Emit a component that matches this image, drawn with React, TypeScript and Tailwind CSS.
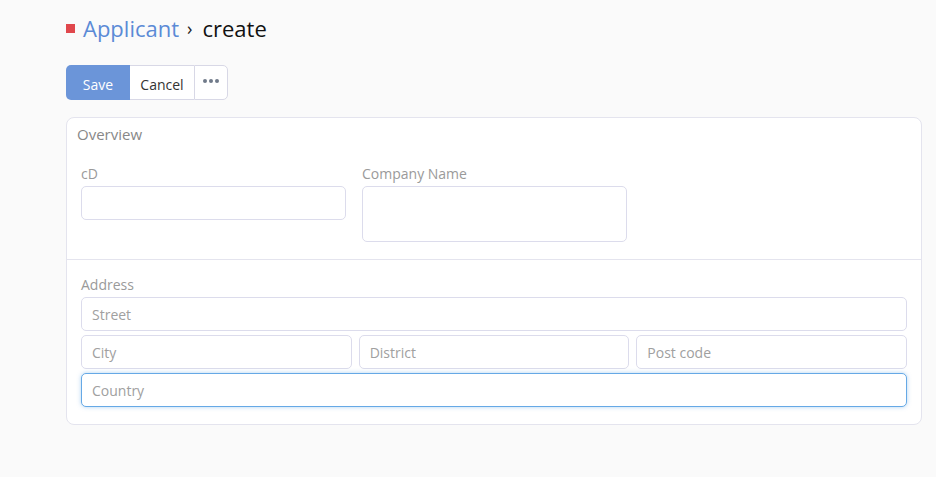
import type { ReactNode } from "react";

const inputBase =
  "h-[34px] w-full rounded-[5px] border border-[#dcdcec] bg-white px-[10px] text-[14px] text-[#333] placeholder:text-[#a0a0a0] outline-none";

const Field = ({ label, children }: { label: string; children: ReactNode }) => (
  <div className="flex w-[265px] flex-col">
    <label className="mb-[2px] text-[14px] leading-[20px] text-[#9a9a9a]">{label}</label>
    {children}
  </div>
);

export default function App() {
  return (
    <div
      className="min-h-[477px] bg-[#fafafa] pl-[66px] pr-[14px] pt-[13px]"
      style={{ fontFamily: '"Open Sans", "Noto Sans", sans-serif' }}
    >
      <div className="flex items-center h-[30px]">
        <span className="mr-[8px] h-[9px] w-[9px] bg-[#e0474c]" />
        <span className="text-[22px] leading-[30px] text-[#5b8ad6]">Applicant</span>
        <span className="ml-[8px] mr-[10px] text-[18px] leading-[30px] text-[#222]">›</span>
        <span className="text-[22px] leading-[30px] text-[#111]">create</span>
      </div>

      <div className="mt-[22px] flex h-[35px] items-stretch">
        <button
          type="button"
          className="h-[35px] w-[64px] rounded-l-[5px] bg-[#6b95d9] pt-[4px] text-[14px] text-white"
        >
          Save
        </button>
        <button
          type="button"
          className="h-[35px] w-[64px] border-y border-[#d8d8e6] bg-white pt-[4px] text-[14px] text-[#333]"
        >
          Cancel
        </button>
        <button
          type="button"
          className="flex h-[35px] w-[34px] items-center justify-center gap-[2px] rounded-r-[5px] border border-[#d8d8e6] bg-white pb-[4px]"
        >
          <span className="h-[4px] w-[4px] rounded-full bg-[#707a8a]" />
          <span className="h-[4px] w-[4px] rounded-full bg-[#707a8a]" />
          <span className="h-[4px] w-[4px] rounded-full bg-[#707a8a]" />
        </button>
      </div>

      <div className="mt-[17px] rounded-[8px] border border-[#e4e4ee] bg-white">
        <div className="px-[10px] pt-[5px] text-[15px] leading-[22px] text-[#888]">Overview</div>
        <div className="flex gap-[16px] px-[14px] pb-[17px] pt-[19px]">
          <Field label="cD">
            <input className={inputBase} />
          </Field>
          <Field label="Company Name">
            <textarea className="h-[56px] w-full resize-none rounded-[5px] border border-[#dcdcec] bg-white px-[10px] py-[6px] text-[14px] outline-none" />
          </Field>
        </div>
        <div className="border-t border-[#e4e4ee] px-[14px] pb-[17px] pt-[15px]">
          <label className="mb-[2px] block text-[14px] leading-[20px] text-[#9a9a9a]">Address</label>
          <div className="flex flex-col gap-[4px]">
            <input className={inputBase} placeholder="Street" />
            <div className="flex gap-[7px]">
              <input className={inputBase} placeholder="City" />
              <input className={inputBase} placeholder="District" />
              <input className={inputBase} placeholder="Post code" />
            </div>
            <input
              className="h-[34px] w-full rounded-[5px] border border-[#66a9e6] bg-white px-[10px] text-[14px] text-[#333] placeholder:text-[#a0a0a0] shadow-[0_0_4px_rgba(102,169,230,0.5)] outline-none"
              placeholder="Country"
            />
          </div>
        </div>
      </div>
    </div>
  );
}
